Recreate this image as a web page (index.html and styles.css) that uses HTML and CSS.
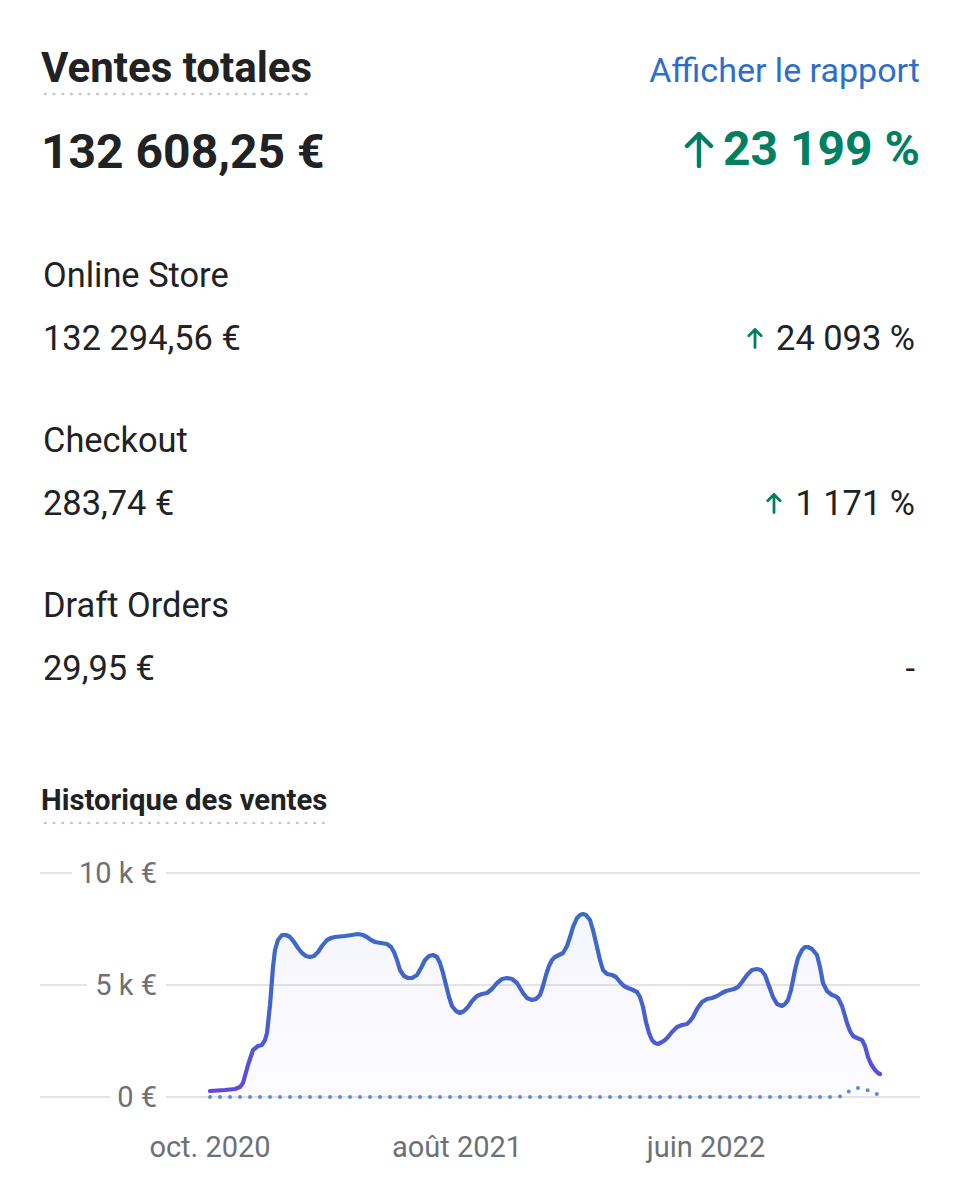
FILE: index.html
```html
<!DOCTYPE html>
<html lang="fr">
<head>
    <meta charset="UTF-8">
    <meta name="viewport" content="width=device-width, initial-scale=1.0">
    <title>Ventes totales</title>
    <link rel="stylesheet" href="styles.css">
</head>
<body>
    <div class="card">
        <header class="card-header">
            <h1 class="title">Ventes totales</h1>
            <a class="report-link" href="#">Afficher le rapport</a>
        </header>

        <div class="total">
            <span class="total-amount">132 608,25 €</span>
            <span class="total-change">
                <svg class="arrow-big" width="32" height="38" viewBox="0 0 32 38"><path d="M16 36V4M4 16L16 4l12 12" fill="none" stroke="currentColor" stroke-width="4.4" stroke-linecap="round" stroke-linejoin="round"/></svg>
                23 199 %
            </span>
        </div>

        <div class="channels">
            <div class="channel">
                <div class="channel-name">Online Store</div>
                <div class="channel-row">
                    <span>132 294,56 €</span>
                    <span class="change"><svg class="arrow" width="18" height="22" viewBox="0 0 18 22"><path d="M9 20.5V2.5M2.8 8.7L9 2.5l6.2 6.2" fill="none" stroke="#008060" stroke-width="2.8" stroke-linecap="round" stroke-linejoin="round"/></svg>24 093 %</span>
                </div>
            </div>
            <div class="channel">
                <div class="channel-name">Checkout</div>
                <div class="channel-row">
                    <span>283,74 €</span>
                    <span class="change"><svg class="arrow" width="18" height="22" viewBox="0 0 18 22"><path d="M9 20.5V2.5M2.8 8.7L9 2.5l6.2 6.2" fill="none" stroke="#008060" stroke-width="2.8" stroke-linecap="round" stroke-linejoin="round"/></svg>1 171 %</span>
                </div>
            </div>
            <div class="channel">
                <div class="channel-name">Draft Orders</div>
                <div class="channel-row">
                    <span>29,95 €</span>
                    <span class="change">-</span>
                </div>
            </div>
        </div>

        <h2 class="subtitle">Historique des ventes</h2>

        <svg class="chart" width="880" height="330" viewBox="40 850 880 330">
            <defs>
                <linearGradient id="lineGrad" gradientUnits="userSpaceOnUse" x1="0" y1="915" x2="0" y2="1090">
                    <stop offset="0" stop-color="#3a6cc4"/>
                    <stop offset="0.6" stop-color="#4760cd"/>
                    <stop offset="1" stop-color="#6048e0"/>
                </linearGradient>
                <linearGradient id="areaGrad" gradientUnits="userSpaceOnUse" x1="0" y1="915" x2="0" y2="1097">
                    <stop offset="0" stop-color="#6a6ee0" stop-opacity="0.07"/>
                    <stop offset="1" stop-color="#6a6ee0" stop-opacity="0.015"/>
                </linearGradient>
            </defs>

            <g class="grid">
                <line x1="40" y1="873" x2="72" y2="873"/>
                <line x1="166" y1="873" x2="920" y2="873"/>
                <line x1="40" y1="985" x2="87" y2="985"/>
                <line x1="166" y1="985" x2="920" y2="985"/>
                <line x1="40" y1="1097" x2="110" y2="1097"/>
                <line x1="166" y1="1097" x2="920" y2="1097"/>
            </g>

            <g class="axis-y">
                <text x="157" y="883">10 k €</text>
                <text x="157" y="995">5 k €</text>
                <text x="157" y="1107">0 €</text>
            </g>

            <path class="area" d="M210 1091 L225 1090 L235 1089 L240 1087 L243 1083 L248 1065 L253 1050 L258 1046 L262 1045 L265 1040 L267 1033 L270 1005 L273 967 L275 950 L278 940 L282 935 L286 935 L290 937 L294 942 L298 948 L302 953 L306 956 L310 957 L314 956 L318 952 L322 946 L327 940 L331 938 L335 937 L345 936 L358 934 L363 935 L367 937 L371 940 L375 942 L381 943 L387 944 L391 947 L394 952 L397 960 L400 970 L404 976 L408 978 L412 978 L417 975 L421 968 L425 960 L429 956 L433 955 L437 957 L440 963 L443 973 L446 985 L449 997 L452 1006 L456 1011 L460 1013 L464 1011 L468 1007 L472 1001 L477 996 L482 994 L487 993 L492 989 L497 983 L502 979 L507 978 L512 979 L517 983 L520 988 L523 993 L527 998 L532 1000 L536 999 L540 995 L543 986 L546 975 L549 966 L552 960 L555 957 L559 955 L563 953 L567 946 L570 937 L573 927 L577 918 L580 915 L583 914 L586 915 L590 920 L593 930 L597 947 L600 960 L603 970 L607 974 L612 975 L616 977 L620 982 L624 986 L628 988 L633 990 L637 992 L640 997 L643 1007 L646 1022 L649 1033 L652 1040 L655 1043 L658 1044 L662 1042 L665 1040 L668 1037 L672 1032 L677 1027 L682 1025 L687 1024 L690 1021 L693 1017 L697 1009 L702 1002 L707 999 L712 998 L717 996 L722 993 L726 991 L730 990 L734 989 L738 987 L742 982 L747 975 L752 970 L757 969 L761 970 L765 975 L769 986 L773 997 L777 1004 L782 1006 L785 1004 L788 1000 L791 990 L795 970 L798 958 L802 950 L805 947 L808 947 L812 949 L817 955 L820 967 L823 983 L827 991 L832 995 L835 996 L838 998 L842 1006 L845 1016 L847 1023 L850 1031 L853 1036 L857 1038 L862 1040 L865 1046 L868 1057 L871 1064 L875 1070 L878 1073 L880 1074 L880 1097 L210 1097 Z"/>

            <path class="previous" d="M210 1097 L836 1097 C845 1097 850 1088 858 1088 C866 1088 872 1093 880 1095"/>

            <path class="sales" d="M210 1091 L225 1090 L235 1089 L240 1087 L243 1083 L248 1065 L253 1050 L258 1046 L262 1045 L265 1040 L267 1033 L270 1005 L273 967 L275 950 L278 940 L282 935 L286 935 L290 937 L294 942 L298 948 L302 953 L306 956 L310 957 L314 956 L318 952 L322 946 L327 940 L331 938 L335 937 L345 936 L358 934 L363 935 L367 937 L371 940 L375 942 L381 943 L387 944 L391 947 L394 952 L397 960 L400 970 L404 976 L408 978 L412 978 L417 975 L421 968 L425 960 L429 956 L433 955 L437 957 L440 963 L443 973 L446 985 L449 997 L452 1006 L456 1011 L460 1013 L464 1011 L468 1007 L472 1001 L477 996 L482 994 L487 993 L492 989 L497 983 L502 979 L507 978 L512 979 L517 983 L520 988 L523 993 L527 998 L532 1000 L536 999 L540 995 L543 986 L546 975 L549 966 L552 960 L555 957 L559 955 L563 953 L567 946 L570 937 L573 927 L577 918 L580 915 L583 914 L586 915 L590 920 L593 930 L597 947 L600 960 L603 970 L607 974 L612 975 L616 977 L620 982 L624 986 L628 988 L633 990 L637 992 L640 997 L643 1007 L646 1022 L649 1033 L652 1040 L655 1043 L658 1044 L662 1042 L665 1040 L668 1037 L672 1032 L677 1027 L682 1025 L687 1024 L690 1021 L693 1017 L697 1009 L702 1002 L707 999 L712 998 L717 996 L722 993 L726 991 L730 990 L734 989 L738 987 L742 982 L747 975 L752 970 L757 969 L761 970 L765 975 L769 986 L773 997 L777 1004 L782 1006 L785 1004 L788 1000 L791 990 L795 970 L798 958 L802 950 L805 947 L808 947 L812 949 L817 955 L820 967 L823 983 L827 991 L832 995 L835 996 L838 998 L842 1006 L845 1016 L847 1023 L850 1031 L853 1036 L857 1038 L862 1040 L865 1046 L868 1057 L871 1064 L875 1070 L878 1073 L880 1074"/>

            <g class="axis-x">
                <text x="210" y="1157">oct. 2020</text>
                <text x="457" y="1157">août 2021</text>
                <text x="706" y="1157">juin 2022</text>
            </g>
        </svg>
    </div>
</body>
</html>
```

FILE: styles.css
```css
body {
    margin: 0;
    background: #ffffff;
    font-family: Roboto, "Liberation Sans", sans-serif;
    color: #202223;
}

.card {
    padding: 47px 39px 0 40px;
}

.card-header {
    display: flex;
    justify-content: space-between;
    align-items: baseline;
}

.title {
    margin: 0 0 0 1px;
    font-size: 42px;
    font-weight: 700;
    line-height: 1;
    padding-bottom: 7px;
    background-image: radial-gradient(circle, #c4c9cf 1.3px, transparent 1.7px);
    background-size: 8.7px 4px;
    background-repeat: repeat-x;
    background-position: left bottom;
}

.report-link {
    font-size: 34px;
    color: #2c6ecb;
    text-decoration: none;
}

.total {
    display: flex;
    justify-content: space-between;
    align-items: baseline;
    margin-top: 29px;
    padding-left: 1px;
    font-size: 48px;
    font-weight: 700;
    line-height: 1;
}

.total-change {
    display: flex;
    align-items: center;
    gap: 8px;
    color: #008060;
}

.arrow-big {
    display: block;
}

.channels {
    margin-top: 82px;
    padding: 0 5px 0 3px;
    font-size: 34.4px;
    line-height: 1;
}

.channel + .channel {
    margin-top: 67.6px;
}

.channel-row {
    display: flex;
    justify-content: space-between;
    margin-top: 28.6px;
}

.change {
    display: flex;
    align-items: center;
    gap: 12px;
}

.arrow {
    display: block;
}

.subtitle {
    width: fit-content;
    margin: 101px 0 0 1px;
    font-size: 29.3px;
    font-weight: 700;
    line-height: 1;
    padding-bottom: 9.7px;
    background-image: radial-gradient(circle, #c4c9cf 1.2px, transparent 1.6px);
    background-size: 8.7px 4px;
    background-repeat: repeat-x;
    background-position: left bottom;
}

.chart {
    display: block;
    margin-top: 25px;
    overflow: visible;
}

.grid line {
    stroke: #e3e4e6;
    stroke-width: 2;
}

.axis-y text,
.axis-x text {
    font-family: Roboto, "Liberation Sans", sans-serif;
    font-size: 29px;
    fill: #6d7175;
}

.axis-y text {
    text-anchor: end;
}

.axis-x text {
    text-anchor: middle;
}

.area {
    fill: url(#areaGrad);
}

.sales {
    fill: none;
    stroke: url(#lineGrad);
    stroke-width: 4.2;
    stroke-linejoin: round;
    stroke-linecap: round;
}

.previous {
    fill: none;
    stroke: #5b8dd0;
    stroke-width: 4;
    stroke-linecap: round;
    stroke-dasharray: 0 10;
}
```
